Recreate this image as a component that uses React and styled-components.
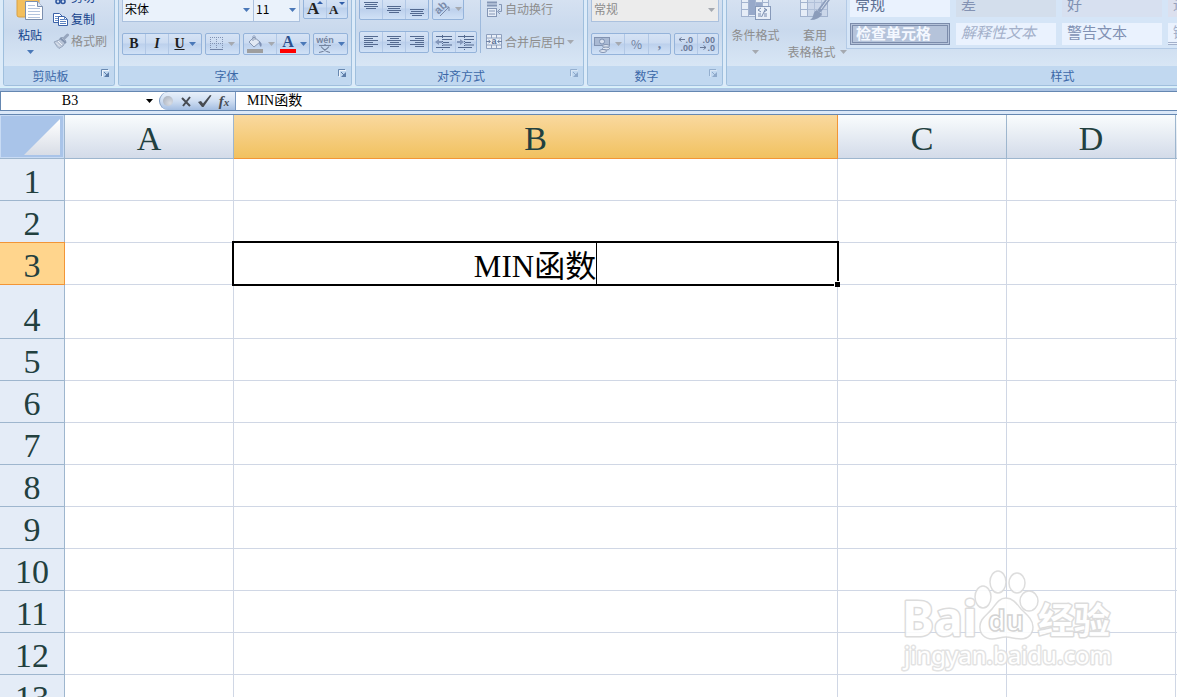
import React from 'react';
import styled, { createGlobalStyle, css } from 'styled-components';

const GlobalStyle = createGlobalStyle`
  *, *::before, *::after { box-sizing: border-box; }
  body { margin: 0; background: #fff; }
  svg { flex: none; }
  button, input, select { font: inherit; color: inherit; margin: 0; padding: 0; border: 0; background: none; }
`;

const uiFont = '"Noto Sans CJK SC", "Liberation Sans", sans-serif';
const sheetFont = '"Liberation Serif", "Noto Sans CJK SC", serif';

const Window = styled.div`
  display: flex;
  flex-direction: column;
  height: 100vh;
  overflow: hidden;
  font: 12px/16px ${uiFont};
  color: #15428b;
`;

/* ---------- Ribbon ---------- */

const Ribbon = styled.header`
  display: flex;
  align-items: flex-end;
  gap: 3px;
  flex: none;
  height: 88px;
  padding: 0 3px 1px;
  overflow: hidden;
  background: #dcebf9;
  border-bottom: 1px solid #d5f3fb;
`;

const Group = styled.section`
  flex: ${(p) => (p.$grow ? `1 0 ${p.$width}px` : `0 0 ${p.$width}px`)};
  display: flex;
  flex-direction: column;
  border: 1px solid #9fbfdd;
  border-top: 0;
  border-radius: 3px;
  overflow: hidden;
`;

const GroupBody = styled.div`
  display: flex;
  height: 80px;
  padding: ${(p) => p.$pad || '0 3px'};
  background: linear-gradient(#dbe5f3, #c9d9ed 55%, #d8e6f5);
`;

const GroupTitle = styled.footer`
  display: flex;
  align-items: center;
  height: 19px;
  padding-right: 1px;
  background: #c1d8f0;
  color: #3c68a8;
  & > span { flex: 1; text-align: center; }
`;

const Launcher = styled.button`
  display: flex;
  justify-content: center;
  width: 16px;
  height: 14px;
  opacity: ${(p) => (p.disabled ? 0.5 : 1)};
`;

const Rows = styled.div`
  display: flex;
  flex-direction: column;
  gap: ${(p) => p.$gap || 0}px;
`;

const Row = styled.div`
  display: flex;
  align-items: flex-start;
  gap: ${(p) => p.$gap ?? 3}px;
  height: ${(p) => p.$h || 22}px;
`;

const BigButton = styled.button`
  display: flex;
  flex-direction: column;
  align-items: center;
  justify-content: flex-start;
  width: ${(p) => p.$w}px;
  color: ${(p) => (p.disabled ? '#8d8d8d' : '#15428b')};
  line-height: 17px;
  white-space: nowrap;
  & > svg:first-child { margin-bottom: 6px; opacity: ${(p) => (p.disabled ? 0.75 : 1)}; }
`;

const SecondLine = styled.span`
  display: flex;
  align-items: center;
  gap: 4px;
  padding-left: ${(p) => (p.$indent ? 4 : 0)}px;
  height: 17px;
`;

const TextButton = styled.button`
  display: flex;
  align-items: center;
  gap: ${(p) => p.$gap || 2}px;
  height: 22px;
  white-space: nowrap;
  color: ${(p) => (p.disabled ? '#8d8d8d' : '#15428b')};
`;

const ButtonBox = styled.div`
  display: flex;
  height: 22px;
  border: 1px solid #94b3da;
  border-radius: 2px;
  background: linear-gradient(#d6e3f5, #cbdbf1 45%, #bcd0ec 50%, #d0e1f6);
`;

const Tool = styled.button`
  display: flex;
  align-items: center;
  justify-content: center;
  gap: 4px;
  width: ${(p) => p.$w || 23}px;
  color: #1e1e1e;
  & + & { border-left: 1px solid #b2c8e6; }
  &:disabled { color: #71819f; }
`;

const Glyph = styled.span`
  font: bold 14px/16px "Liberation Serif", serif;
  font-style: ${(p) => (p.$italic ? 'italic' : 'normal')};
  text-decoration: ${(p) => (p.$underline ? 'underline' : 'none')};
`;

const Divider = styled.div`
  width: 1px;
  height: 55px;
  margin: 0 5px 0 3px;
  background: #9db9dc;
`;

const ComboWrap = styled.label`
  display: grid;
  grid-template-columns: 1fr 14px;
  align-items: center;
  width: ${(p) => p.$w}px;
  height: 25px;
  border: 1px solid #abc1de;
  background: ${(p) => (p.$off ? '#ececec' : '#eaf2fb')};
  color: ${(p) => (p.$off ? '#8d8d8d' : '#000')};
  & > select {
    grid-area: 1 / 1 / 2 / 3;
    appearance: none;
    width: 100%;
    height: 22px;
    padding: 0 0 2px 2px;
    opacity: 1;
    outline: 0;
  }
  & > svg { grid-area: 1 / 2; justify-self: center; pointer-events: none; }
  & + & { border-left: 0; }
`;

const Gallery = styled.div`
  flex: 1;
  display: grid;
  grid-template-columns: repeat(4, 100px);
  grid-auto-rows: 22px;
  gap: 6px;
  align-self: flex-start;
  height: 63px;
  padding: 8px 0 0 3px;
  overflow: hidden;
  border: 1px solid #b3cae6;
  background: #d5e5f7;
`;

const tones = {
  normal: css`background: #eaf2fe; color: #5c6f92;`,
  bad: css`background: #d3deec; color: #8493b3;`,
  good: css`background: #d7e0f0; color: #7f90b2;`,
  neutral: css`background: #dce0ee; color: #98a1bb;`,
  check: css`
    background: #b5c3da; color: #f4f8ff; font-weight: bold;
    border: 3px double #7c8cab; line-height: 14px; padding-left: 3px;
  `,
  note: css`background: #eaf2fe; color: #a3b0ca; font-style: italic;`,
  warn: css`background: #eaf2fe; color: #8191b3;`,
  link: css`background: #eaf2fe; color: #a3b0ca; border-bottom: 3px double #a3b0ca;`,
};

const StyleCell = styled.button`
  display: flex;
  align-items: flex-start;
  padding-left: 5px;
  white-space: nowrap;
  font-size: 15px;
  line-height: 18px;
  ${(p) => tones[p.$tone]}
`;

/* ---------- Formula bar ---------- */

const FormulaBar = styled.div`
  display: flex;
  flex: none;
  height: 23px;
  border-top: 3px solid #abc3e3;
  border-bottom: 1px solid #6587b1;
  background: #fff;
  box-shadow: inset 0 1px #6587b1;
  padding-top: 1px;
  color: #000;
  font: 14px/18px ${sheetFont};
`;

const NameBox = styled.div`
  display: flex;
  align-items: center;
  width: 159px;
  border-left: 1px solid #6587b1;
  & > input { width: 138px; height: 18px; text-align: center; outline: 0; }
  & > button { display: flex; justify-content: center; width: 20px; }
`;

const FormulaButtons = styled.div`
  display: flex;
  align-items: center;
  width: 77px;
  padding-left: 3px;
  gap: 3px;
  border: solid #7897c0;
  border-width: 0 1px;
  border-radius: 9px 0 0 9px;
  background: linear-gradient(#e8f0fa, #cfdef2 50%, #a3bde1);
  & > button { display: flex; align-items: center; justify-content: center; width: 16px; height: 18px; color: #474b52; }
`;

const Orb = styled.span`
  width: 10px;
  height: 10px;
  margin-right: 2px;
  border-radius: 50%;
  background: radial-gradient(circle at 7px 7px, #d9dde4, #a4acb9);
`;

const Fx = styled.span`
  font: italic bold 15px/18px "Liberation Serif", serif;
  & > small { font-size: 11px; }
`;

const FormulaInput = styled.input`
  flex: 1;
  height: 18px;
  padding-left: 11px !important;
  outline: 0;
`;

const BarEdge = styled.div`
  flex: none;
  height: 4px;
  background: #dbe8f8;
  border-bottom: 1px solid #6587b1;
`;

/* ---------- Sheet ---------- */

const SheetArea = styled.main`
  position: relative;
  flex: 1;
  min-height: 0;
  overflow: hidden;
`;

const Table = styled.table`
  width: 100%;
  table-layout: fixed;
  border-collapse: separate;
  border-spacing: 0;
  font: 34px/34px ${sheetFont};
  color: #22403f;
  & th:last-child, & td:last-child { border-right: 0; }
`;

const Col = styled.col`
  width: ${(p) => (p.$w ? `${p.$w}px` : 'auto')};
`;

const ColHead = styled.th`
  height: 44px;
  padding: 4px 0 0;
  font-weight: normal;
  border: solid ${(p) => (p.$active ? '#f29536' : '#9eb6ce')};
  border-width: 0 1px 1px 0;
  background: ${(p) => (p.$active
    ? 'linear-gradient(#f9d99f, #f1c15f)'
    : 'linear-gradient(#f9fcfd, #d3dbe9)')};
`;

const Corner = styled.th`
  padding: 0;
  border: solid #9eb6ce;
  border-width: 0 1px 1px 0;
  background: #a9c4e9;
  box-shadow: inset 0 0 0 1px #c8dbf4;
  & > button { display: flex; width: 100%; height: 43px; align-items: flex-end; justify-content: flex-end; padding: 0 4px 3px 0; }
`;

const RowHead = styled.th`
  height: ${(p) => p.$h}px;
  padding: 0 0 1px;
  vertical-align: bottom;
  font-weight: normal;
  border: solid ${(p) => (p.$active ? '#f29536' : '#9eb6ce')};
  border-width: 0 1px 1px 0;
  background: ${(p) => (p.$active ? '#ffd58d' : '#e4ecf7')};
  ${(p) => p.$active && 'box-shadow: 0 -1px #f29536;'}
`;

const Cell = styled.td`
  position: relative;
  padding: 0;
  border: solid #d0d7e5;
  border-width: 0 1px 1px 0;
`;

const Selection = styled.div`
  position: absolute;
  inset: -2px;
  z-index: 1;
  display: flex;
  justify-content: center;
  border: 2px solid #000;
  background: #fff;
  &::after {
    content: '';
    position: absolute;
    right: -3px;
    bottom: -3px;
    width: 6px;
    height: 6px;
    background: #000;
    border: solid #fff;
    border-width: 1px 0 0 1px;
  }
`;

const CellEditor = styled.input`
  field-sizing: content;
  height: 100%;
  padding-bottom: 1px !important;
  border-right: 1px solid #000 !important;
  outline: 0;
  color: #000;
  font-size: 31px !important;
  line-height: 36px !important;
`;

const Watermark = styled.svg`
  position: absolute;
  right: 57px;
  bottom: 22px;
  pointer-events: none;
`;

/* ---------- Icons ---------- */

const Arrow = ({ off, dark }) => (
  <svg width="7" height="4" viewBox="0 0 7 4" aria-hidden="true">
    <path d="M0 0h7L3.500 4z" fill={dark ? '#000' : off ? '#a5a9b0' : '#4a78b8'} />
  </svg>
);

const LauncherIcon = () => (
  <svg width="9" height="9" viewBox="0 0 9 9">
    <path d="M0.500 7V0.500H7" fill="none" stroke="#6888b0" />
    <path d="M3 3l3 3" stroke="#5c7ca8" />
    <path d="M8 3v5H3z" fill="#5c7ca8" />
    <path d="M1.500 8V1.500H8" fill="none" stroke="#fff" opacity=".7" />
  </svg>
);

const PasteIcon = () => (
  <svg width="30" height="34" viewBox="0 0 30 34">
    <rect x="2" y="1" width="22" height="30" rx="2" fill="#f3bf5d" stroke="#d9a044" />
    <rect x="8" y="0" width="10" height="5" rx="1" fill="#b9c4d4" stroke="#75869e" />
    <path d="M10.500 15.500h12l5 5v13h-17z" fill="#fff" stroke="#7b8fae" />
    <path d="M22.500 15.500v5h5" fill="#dce6f4" stroke="#7b8fae" />
    <path d="M13 19.500h7M13 22.500h12M13 25.500h12M13 28.500h12M13 31.500h12" stroke="#b3c4dd" />
  </svg>
);

const CutIcon = () => (
  <svg width="16" height="16" viewBox="0 0 16 16" fill="none" stroke="#2f58a0" strokeWidth="1.600">
    <path d="M5 0l4 10M11 0L6 10" />
    <circle cx="5" cy="12.500" r="2" /><circle cx="10" cy="12.500" r="2" />
  </svg>
);

const CopyIcon = () => (
  <svg width="16" height="16" viewBox="0 0 16 16" stroke="#3a62a8">
    <path d="M.5 2.500h6l3 3v6h-9z" fill="#fff" />
    <path d="M2 5.500h4M2 7.500h4M2 9.500h4" stroke="#6f93cc" />
    <path d="M5.500 5.500h6l3 3v6h-9z" fill="#fff" />
    <path d="M7 8.500h4M7 10.500h6M7 12.500h6M11.500 5.500v3h3" stroke="#5a82c0" fill="none" />
  </svg>
);

const BrushIcon = () => (
  <svg width="16" height="16" viewBox="0 0 16 16">
    <path d="M14.500 2l-4 4" stroke="#97a6be" strokeWidth="3" strokeLinecap="round" />
    <path d="M1 9l5-2 3-3 4 4-3 5-4 2.500-2-2z" fill="#b9c5d8" stroke="#97a6bd" />
    <path d="M7 5l6 5" stroke="#8394b0" strokeWidth="2" />
    <path d="M3 9.500l4 4M5 8l4 4" stroke="#eef2f8" />
  </svg>
);

const GrowIcon = ({ size, up }) => (
  <svg width="20" height="19" viewBox="0 0 20 19">
    <text x="2" y="15" fontFamily="Liberation Serif, serif" fontWeight="bold" fontSize={size} fill="#222">A</text>
    <path d={up ? 'M12 5h6l-3-3z' : 'M12 3h6l-3 3z'} fill="#2f5ca8" />
  </svg>
);

const BorderIcon = () => (
  <svg width="14" height="14" viewBox="0 0 14 14">
    <path d="M.5 0v12M6.500 0v12M12.500 0v12M0 .5h13M0 6.500h13" stroke="#8293b3" strokeDasharray="1 1" />
    <path d="M0 12.500h13" stroke="#7184a8" />
  </svg>
);

const FillIcon = () => (
  <svg width="18" height="18" viewBox="0 0 18 18">
    <path d="M3 7l5-5 6 5-6 5z" fill="#e1e8f3" stroke="#8797b2" />
    <path d="M7 6V1.500q1-2 2 0V5" fill="none" stroke="#8797b2" />
    <path d="M13 6q4 2 2 6-2-1-2-6z" fill="#7d90b4" />
    <rect x="1" y="14" width="16" height="4" fill="#9e9e9e" />
  </svg>
);

const FontColorIcon = () => (
  <svg width="16" height="18" viewBox="0 0 16 18">
    <text x="8" y="12" textAnchor="middle" fontFamily="Liberation Serif, serif" fontWeight="bold" fontSize="16" fill="#2b4f8e">A</text>
    <rect y="14" width="16" height="4" fill="#f00" />
  </svg>
);

const PhoneticIcon = () => (
  <svg width="18" height="20" viewBox="0 0 18 20">
    <text x="9" y="9" textAnchor="middle" fontFamily="Liberation Sans, sans-serif" fontWeight="bold" fontSize="9" fill="#74839f">wén</text>
    <path d="M3 11.500h12M9 10v2M5 12.500q4 5 9 6M13 12.500q-4 5-10 6" fill="none" stroke="#74839f" strokeWidth="1.200" />
  </svg>
);

const Lines = ({ rows }) => (
  <svg width="16" height="16" viewBox="0 0 16 16">
    {rows.map(([x, y, w], i) => <rect key={i} x={x} y={y} width={w} height="1" fill="#53698f" />)}
  </svg>
);

const vAlign = (y) => [[1, y, 14], [2, y + 2, 12], [1, y + 4, 14], [3, y + 6, 10]];
const hAlign = (mode) => [14, 9, 14, 9, 14, 9].map((w, i) => {
  const x = mode === 'left' ? 1 : mode === 'right' ? 15 - w : Math.round(8 - w / 2);
  return [x, 2 + i * 2, w];
});

const AngleIcon = () => (
  <svg width="17" height="17" viewBox="0 0 17 17">
    <text x="1" y="11" transform="rotate(-45 6 8)" fontFamily="Liberation Sans, sans-serif" fontSize="11" fontWeight="bold" fill="#7b8baa">ab</text>
    <path d="M6 15l9-9M11 6h4v4" fill="none" stroke="#7b8baa" />
  </svg>
);

const IndentIcon = ({ out }) => (
  <svg width="18" height="16" viewBox="0 0 18 16">
    <path d="M1 2.500h16M8 5.500h9M8 8.500h6M8 11h9M1 13.500h14" stroke="#53698f" />
    <path d="M7.500 1v15" stroke="#53698f" strokeDasharray="1 1" />
    <path d={out ? 'M0 8l4-3v2h3v2H4v2z' : 'M7 8L3 5v2H0v2h3v2z'} fill="#8397ba" />
  </svg>
);

const WrapIcon = () => (
  <svg width="17" height="16" viewBox="0 0 17 16" fill="none" stroke="#8496b5">
    <path d="M1 1.500h10M1 4.500h10" strokeWidth="2" />
    <rect x="1.500" y="7.500" width="9" height="8" fill="#e6edf7" />
    <path d="M3 10h6M3 13h6M13 3.500h2.500v7h-3M14 8l-2.500 2.500L14 13" />
  </svg>
);

const MergeIcon = () => (
  <svg width="17" height="16" viewBox="0 0 17 16">
    <path d="M.5 .5h15v14H.5zM.5 4h15M.5 11h15M5.500 .5V4M10.500 .5V4M5.500 11v4M10.500 11v4" fill="#e9eff8" stroke="#8ea0be" />
    <path d="M0 7.500h4M2.500 6l2 1.500-2 1.500M16 7.500h-4M13.500 6l-2 1.500 2 1.500" fill="none" stroke="#6e82a6" />
    <text x="8" y="10" textAnchor="middle" fontFamily="Liberation Sans, sans-serif" fontSize="9" fontWeight="bold" fill="#5d7297">a</text>
  </svg>
);

const MoneyIcon = () => (
  <svg width="17" height="17" viewBox="0 0 17 17">
    <rect x=".5" y="1.500" width="15" height="8" fill="#a9b9d3" stroke="#8293b1" />
    <circle cx="8" cy="5.500" r="2.500" fill="#d8e0ed" stroke="#7d90b2" />
    <ellipse cx="12" cy="10" rx="3.500" ry="1.500" fill="#e0e7f1" stroke="#8293b1" />
    <ellipse cx="12" cy="12.500" rx="3.500" ry="1.500" fill="#e0e7f1" stroke="#8293b1" />
    <ellipse cx="9" cy="15" rx="3.500" ry="1.500" fill="#e0e7f1" stroke="#8293b1" />
  </svg>
);

const DecimalIcon = ({ more }) => (
  <svg width="18" height="18" viewBox="0 0 18 18" fontFamily="Liberation Sans, sans-serif" fontSize="9" fontWeight="bold" fill="#6a7a99">
    <text x="16" y="8" textAnchor="end">{more ? '.0' : '.00'}</text>
    <text x="16" y="16" textAnchor="end">{more ? '.00' : '.0'}</text>
    <path d={more ? 'M8 4.500H2M4.500 2.500l-2.500 2 2.500 2' : 'M1 12.500h6M4.500 10.500l2.500 2-2.500 2'} fill="none" stroke="#6a7a99" />
  </svg>
);

const GridBase = () => (
  <>
    <rect x="1.500" y=".5" width="27" height="28" fill="#eef3fa" stroke="#93a5c4" />
    <path d="M8.500 .5v28M15.500 .5v28M22.500 .5v28M1.500 7.500h27M1.500 14.500h27M1.500 21.500h27" stroke="#93a5c4" />
  </>
);

const ConditionalIcon = () => (
  <svg width="32" height="34" viewBox="0 -2 32 34">
    <GridBase />
    <path d="M9 1h6v26H9zM16 15h6v6h-6z" fill="#8397bd" />
    <rect x="15.500" y="18.500" width="15" height="13" fill="#f2f6fc" stroke="#6f83a8" />
    <path d="M21 20l-3 2 3 2M18 26h3M18 28h3M24 20l3 2-3 2M24 26h3M24 28h3M25.500 21l-4 8" fill="none" stroke="#5a6f97" />
  </svg>
);

const TableStyleIcon = () => (
  <svg width="32" height="34" viewBox="0 -2 32 34">
    <GridBase />
    <path d="M9 8h19v20H9z" fill="#b3c2dc" opacity=".6" />
    <path d="M30 10l-9 12" stroke="#7689ac" strokeWidth="4" strokeLinecap="round" />
    <path d="M30 10l-8 11" stroke="#d5deec" strokeWidth="1" />
    <path d="M18 22l5 4q-3 6-12 6 3-2 3-4 1-5 4-6z" fill="#7587a9" />
  </svg>
);

const CancelIcon = () => (
  <svg width="11" height="11" viewBox="0 0 11 11"><path d="M1 2l8 8M9 1L2 10" stroke="currentColor" strokeWidth="2" /></svg>
);
const AcceptIcon = () => (
  <svg width="14" height="12" viewBox="0 0 14 12"><path d="M0 7l3-1 2 2.500L12 0l1.500.5L5.500 12H4z" fill="currentColor" /></svg>
);
const CornerIcon = () => (
  <svg width="36" height="36" viewBox="0 0 36 36">
    <defs><linearGradient id="corner" x2="0" y2="1"><stop stopColor="#fff" /><stop offset="1" stopColor="#d8dde6" /></linearGradient></defs>
    <path d="M36 0v36H0z" fill="url(#corner)" />
  </svg>
);

const SiteMark = () => (
  <Watermark width="220" height="110" viewBox="0 0 220 110" fill="#fff" stroke="#dadada" strokeWidth="1.500" opacity=".9">
    <g paintOrder="stroke" strokeLinejoin="round">
      <g fontWeight="bold" stroke="#d9d9d9" strokeWidth="3">
        <text x="2" y="71" fontFamily="Noto Sans, sans-serif" fontSize="48">Bai</text>
        <text x="138" y="69" fontFamily="Noto Sans CJK SC, sans-serif" fontSize="36">经验</text>
      </g>
      <text x="4" y="99" fontFamily="Noto Sans, sans-serif" fontSize="24" stroke="#e0e0e0" strokeWidth="3">jingyan.baidu.com</text>
    </g>
    <ellipse cx="83" cy="32" rx="8" ry="11" />
    <ellipse cx="98" cy="17" rx="8" ry="11" />
    <ellipse cx="117" cy="18" rx="8" ry="10" />
    <ellipse cx="129" cy="36" rx="9" ry="10" />
    <path d="M106 33c-7 0-10 6-14 11-5 6-13 10-12 19 0 6 5 11 12 11 5 0 9-2 14-2s9 2 15 2c7 0 12-5 12-12 0-8-7-13-12-18-4-5-8-11-15-11z" />
    <text x="106" y="66" textAnchor="middle" fontFamily="Noto Sans, sans-serif" fontWeight="bold" fontSize="28" stroke="#cfcfcf">du</text>
  </Watermark>
);

/* ---------- Parts ---------- */

const Combo = ({ label, value, w, off }) => (
  <ComboWrap $w={w} $off={off}>
    <select aria-label={label} defaultValue={value} disabled={off}><option>{value}</option></select>
    <Arrow off={off} />
  </ComboWrap>
);

const RibbonGroup = ({ title, width, pad, grow, launcher = true, off, children }) => (
  <Group $width={width} $grow={grow} aria-label={title}>
    <GroupBody $pad={pad}>{children}</GroupBody>
    <GroupTitle>
      <span>{title}</span>
      {launcher && <Launcher aria-label={`${title}选项`} disabled={off}><LauncherIcon /></Launcher>}
    </GroupTitle>
  </Group>
);

const galleryStyles = [
  ['常规', 'normal'], ['差', 'bad'], ['好', 'good'], ['适中', 'neutral'],
  ['检查单元格', 'check'], ['解释性文本', 'note'], ['警告文本', 'warn'], ['链接单元格', 'link'],
];

const columns = ['A', 'B', 'C', 'D'];
const rowNumbers = Array.from({ length: 13 }, (_, i) => i + 1);

export default function App() {
  return (
    <Window>
      <GlobalStyle />
      <Ribbon>
        <RibbonGroup title="剪贴板" width={112}>
          <BigButton $w={46}>
            <PasteIcon />
            <span>粘贴</span>
            <SecondLine><Arrow /></SecondLine>
          </BigButton>
          <Rows>
            <TextButton><CutIcon />剪切</TextButton>
            <TextButton><CopyIcon />复制</TextButton>
            <TextButton disabled><BrushIcon />格式刷</TextButton>
          </Rows>
        </RibbonGroup>

        <RibbonGroup title="字体" width={234} pad="11px 3px 0">
          <Rows $gap={11}>
            <Row $h={25}>
              <Row $gap={0} $h={25}>
                <Combo label="字体" value="宋体" w={132} />
                <Combo label="字号" value="11" w={46} />
              </Row>
              <ButtonBox>
                <Tool $w={22} aria-label="增大字号"><GrowIcon size={17} up /></Tool>
                <Tool $w={21} aria-label="减小字号"><GrowIcon size={13} /></Tool>
              </ButtonBox>
            </Row>
            <Row>
              <ButtonBox>
                <Tool $w={22}><Glyph>B</Glyph></Tool>
                <Tool $w={23}><Glyph $italic>I</Glyph></Tool>
                <Tool $w={33}><Glyph $underline>U</Glyph><Arrow /></Tool>
              </ButtonBox>
              <ButtonBox><Tool $w={33} disabled aria-label="边框"><BorderIcon /><Arrow off /></Tool></ButtonBox>
              <ButtonBox>
                <Tool $w={32} disabled aria-label="填充颜色"><FillIcon /><Arrow off /></Tool>
                <Tool $w={33} aria-label="字体颜色"><FontColorIcon /><Arrow /></Tool>
              </ButtonBox>
              <ButtonBox><Tool $w={33} aria-label="拼音"><PhoneticIcon /><Arrow /></Tool></ButtonBox>
            </Row>
          </Rows>
        </RibbonGroup>

        <RibbonGroup title="对齐方式" width={229} pad="12px 3px 0" off>
          <Rows $gap={11}>
            <Row>
              <ButtonBox>
                <Tool $w={22} aria-label="顶端对齐"><Lines rows={vAlign(1)} /></Tool>
                <Tool aria-label="垂直居中"><Lines rows={vAlign(5)} /></Tool>
                <Tool aria-label="底端对齐"><Lines rows={vAlign(8)} /></Tool>
              </ButtonBox>
              <ButtonBox><Tool $w={30} disabled aria-label="方向"><AngleIcon /><Arrow off /></Tool></ButtonBox>
            </Row>
            <Row>
              <ButtonBox>
                <Tool $w={22} aria-label="左对齐"><Lines rows={hAlign('left')} /></Tool>
                <Tool aria-label="居中"><Lines rows={hAlign('center')} /></Tool>
                <Tool aria-label="右对齐"><Lines rows={hAlign('right')} /></Tool>
              </ButtonBox>
              <ButtonBox>
                <Tool $w={22} aria-label="减少缩进"><IndentIcon out /></Tool>
                <Tool $w={21} aria-label="增加缩进"><IndentIcon /></Tool>
              </ButtonBox>
            </Row>
          </Rows>
          <Divider />
          <Rows $gap={11}>
            <TextButton disabled><WrapIcon />自动换行</TextButton>
            <TextButton disabled><MergeIcon />合并后居中<Arrow off /></TextButton>
          </Rows>
        </RibbonGroup>

        <RibbonGroup title="数字" width={136} pad="11px 3px 0" off>
          <Rows $gap={11}>
            <Combo label="数字格式" value="常规" w={128} off />
            <Row>
              <ButtonBox>
                <Tool $w={32} disabled aria-label="会计数字格式"><MoneyIcon /><Arrow off /></Tool>
                <Tool $w={24} disabled>%</Tool>
                <Tool $w={22} disabled><Glyph>,</Glyph></Tool>
              </ButtonBox>
              <ButtonBox>
                <Tool $w={22} disabled aria-label="增加小数位数"><DecimalIcon more /></Tool>
                <Tool $w={21} disabled aria-label="减少小数位数"><DecimalIcon /></Tool>
              </ButtonBox>
            </Row>
          </Rows>
        </RibbonGroup>

        <RibbonGroup title="样式" width={674} grow launcher={false} pad="0 3px 0 0">
          <BigButton $w={57} disabled>
            <ConditionalIcon />
            <span>条件格式</span>
            <SecondLine><Arrow off /></SecondLine>
          </BigButton>
          <BigButton $w={62} disabled>
            <TableStyleIcon />
            <span>套用</span>
            <SecondLine $indent>表格格式<Arrow off /></SecondLine>
          </BigButton>
          <Gallery>
            {galleryStyles.map(([name, tone]) => <StyleCell key={name} $tone={tone}>{name}</StyleCell>)}
          </Gallery>
        </RibbonGroup>
      </Ribbon>

      <FormulaBar>
        <NameBox>
          <input aria-label="名称框" defaultValue="B3" />
          <button aria-label="名称列表"><Arrow dark /></button>
        </NameBox>
        <FormulaButtons>
          <Orb />
          <button aria-label="取消"><CancelIcon /></button>
          <button aria-label="输入"><AcceptIcon /></button>
          <button aria-label="插入函数"><Fx>f<small>x</small></Fx></button>
        </FormulaButtons>
        <FormulaInput aria-label="编辑栏" defaultValue="MIN函数" />
      </FormulaBar>
      <BarEdge />

      <SheetArea>
        <Table>
          <colgroup>
            <Col $w={65} /><Col $w={169} /><Col $w={604} /><Col $w={169} /><Col $w={169} /><Col />
          </colgroup>
          <thead>
            <tr>
              <Corner><button aria-label="全选"><CornerIcon /></button></Corner>
              {columns.map((c) => <ColHead key={c} scope="col" $active={c === 'B'}>{c}</ColHead>)}
              <ColHead />
            </tr>
          </thead>
          <tbody>
            {rowNumbers.map((n) => (
              <tr key={n}>
                <RowHead scope="row" $h={n === 4 ? 54 : 42} $active={n === 3}>{n}</RowHead>
                {columns.map((c) => (
                  <Cell key={c}>
                    {c === 'B' && n === 3 && (
                      <Selection><CellEditor aria-label="B3" defaultValue="MIN函数" /></Selection>
                    )}
                  </Cell>
                ))}
                <Cell />
              </tr>
            ))}
          </tbody>
        </Table>
        <SiteMark />
      </SheetArea>
    </Window>
  );
}
